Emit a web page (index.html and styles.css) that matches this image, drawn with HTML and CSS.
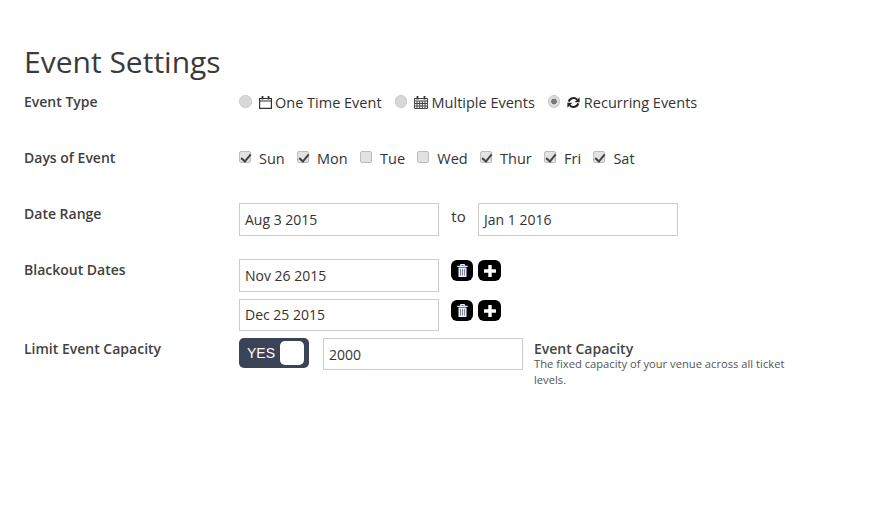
FILE: index.html
```html
<!DOCTYPE html>
<html lang="en">
<head>
<meta charset="utf-8">
<title>Event Settings</title>
<link rel="stylesheet" href="styles.css">
</head>
<body>
<main class="page">
  <h1 class="title">Event Settings</h1>

  <section class="row row-type">
    <div class="label">Event Type</div>
    <div class="options">
      <label class="opt opt-radio"><span class="radio"></span>
        <svg class="ico" viewBox="0 0 13 13" width="13" height="13"><path d="M.6 2.500h11.800v9.900H.6z M.6 5h11.800" fill="none" stroke="#333" stroke-width="1.200"/><path d="M3.500 0v3.500M9.500 0v3.500" stroke="#333" stroke-width="1.800" fill="none"/></svg>
        <span>One Time Event</span></label>
      <label class="opt opt-radio"><span class="radio"></span>
        <svg class="ico" viewBox="0 0 14 13" width="14" height="13"><path d="M.5 2.500h13v10h-13z M.5 5h13 M.5 7.500h13 M.5 10h13 M3 5v7.500 M5.700 5v7.500 M8.300 5v7.500 M11 5v7.500" fill="none" stroke="#444" stroke-width="1"/><path d="M3.500 0v3.500M10.500 0v3.500" stroke="#333" stroke-width="1.800" fill="none"/></svg>
        <span>Multiple Events</span></label>
      <label class="opt opt-radio"><span class="radio radio-on"></span>
        <svg class="ico" viewBox="0 0 13 13" width="13" height="13"><path d="M1.700 5.600A5 5 0 0 1 10.200 3.700" fill="none" stroke="#222" stroke-width="2"/><path d="M12.600 1.200v5h-5z" fill="#222"/><path d="M11.300 7.400A5 5 0 0 1 2.800 9.300" fill="none" stroke="#222" stroke-width="2"/><path d="M.4 11.800v-5h5z" fill="#222"/></svg>
        <span>Recurring Events</span></label>
    </div>
  </section>

  <section class="row row-days">
    <div class="label">Days of Event</div>
    <div class="options days">
      <label class="opt"><span class="check on"></span><span>Sun</span></label>
      <label class="opt"><span class="check on"></span><span>Mon</span></label>
      <label class="opt"><span class="check"></span><span>Tue</span></label>
      <label class="opt"><span class="check"></span><span>Wed</span></label>
      <label class="opt"><span class="check on"></span><span>Thur</span></label>
      <label class="opt"><span class="check on"></span><span>Fri</span></label>
      <label class="opt"><span class="check on"></span><span>Sat</span></label>
    </div>
  </section>

  <section class="row row-date">
    <div class="label">Date Range</div>
    <div class="range">
      <div class="field">Aug 3 2015</div>
      <span class="to">to</span>
      <div class="field">Jan 1 2016</div>
    </div>
  </section>

  <section class="row row-blackout">
    <div class="label">Blackout Dates</div>
    <div class="stack">
      <div class="date-line">
        <div class="field">Nov 26 2015</div>
        <div class="btns">
          <span class="btn"><svg viewBox="0 0 11 13" width="11" height="13"><path d="M3.800 2V.7h3.400V2M.3 2.400h10.400" fill="none" stroke="#e8f0ff" stroke-width="1.200"/><path d="M1.500 3.500h8v9.500h-8z" fill="#e8f0ff"/><path d="M3.500 5v6.500M5.500 5v6.500M7.500 5v6.500" stroke="#667" stroke-width=".8"/></svg></span>
          <span class="btn"><svg viewBox="0 0 12 12" width="12" height="12"><path d="M6 0v12M0 6h12" stroke="#fff" stroke-width="3.400"/></svg></span>
        </div>
      </div>
      <div class="date-line second">
        <div class="field">Dec 25 2015</div>
        <div class="btns">
          <span class="btn"><svg viewBox="0 0 11 13" width="11" height="13"><path d="M3.800 2V.7h3.400V2M.3 2.400h10.400" fill="none" stroke="#e8f0ff" stroke-width="1.200"/><path d="M1.500 3.500h8v9.500h-8z" fill="#e8f0ff"/><path d="M3.500 5v6.500M5.500 5v6.500M7.500 5v6.500" stroke="#667" stroke-width=".8"/></svg></span>
          <span class="btn"><svg viewBox="0 0 12 12" width="12" height="12"><path d="M6 0v12M0 6h12" stroke="#fff" stroke-width="3.400"/></svg></span>
        </div>
      </div>
    </div>
  </section>

  <section class="row row-limit">
    <div class="label">Limit Event Capacity</div>
    <div class="limit">
      <div class="toggle"><span class="toggle-text">YES</span><span class="knob"></span></div>
      <div class="field">2000</div>
      <div class="help">
        <div class="help-title">Event Capacity</div>
        <div class="help-text">The fixed capacity of your venue across all ticket levels.</div>
      </div>
    </div>
  </section>
</main>
</body>
</html>
```
FILE: styles.css
```css
* { box-sizing: border-box; }
html, body { margin: 0; padding: 0; background: #fff; }
body { font-family: "Open Sans", sans-serif; color: #333; font-size: 14px; }
.page { padding: 42px 0 0 24px; }
.title { margin: 0; font-size: 30px; font-weight: 400; line-height: 40px; color: #3a3a3a; height: 49px; }
.row { display: flex; align-items: flex-start; }
.label { width: 215px; flex: none; font-weight: 600; font-size: 14px; line-height: 18px; color: #3f3f3f; padding-top: 2px; }
.row-type { height: 56px; }
.row-days { height: 56px; }
.row-date { height: 56px; }
.row-blackout { height: 79px; }
.options { display: flex; padding-top: 2px; font-size: 14.500px; line-height: 20px; }
.opt { display: flex; align-items: flex-start; }
.opt-radio { margin-right: 13px; }
.opt-radio .ico { margin: 3px 3.500px 0 7px; }
.days .opt { margin-right: 12.300px; }
.days .opt .check { margin-right: 8px; }
.radio { width: 12.500px; height: 12.500px; border-radius: 50%; margin-top: 2px; background: #d8d8d8; border: 1px solid #c8c8c8; }
.radio-on { background: radial-gradient(circle, #777 0 2.500px, #dcdcdc 3.200px); }
.check { position: relative; width: 12px; height: 12px; border-radius: 2px; margin-top: 2px; background: #e2e2e2; border: 1px solid #bdbdbd; }
.check.on::after { content: ""; position: absolute; left: 3px; top: 0; width: 4px; height: 8px; border: solid #444; border-width: 0 2px 2px 0; transform: rotate(40deg); }
.field { width: 200px; flex: none; height: 33px; border: 1px solid #ccc; padding-left: 5px; font-size: 14px; line-height: 31px; color: #333; background: #fff; }
.range { display: flex; }
.to { width: 39px; text-align: center; font-size: 15px; line-height: 26px; }
.date-line { display: flex; }
.date-line.second { margin-top: 7px; }
.date-line.second .field { height: 32px; line-height: 30px; }
.btns { display: flex; gap: 5px; margin: 1px 0 0 12px; }
.btn { width: 22px; height: 21px; background: #000; border-radius: 6px; display: flex; align-items: center; justify-content: center; }
.btn + .btn { width: 23px; }
.limit { display: flex; }
.toggle { width: 70px; height: 30px; background: #3b4457; border-radius: 5px; display: flex; align-items: center; justify-content: space-between; padding: 0 5px 0 8px; margin-right: 14px; font-family: "Liberation Sans", sans-serif; color: #fff; font-size: 14px; }
.knob { width: 24px; height: 24px; background: #fff; border-radius: 5px; }
.limit .field { height: 32px; line-height: 31px; }
.help { width: 270px; margin-left: 11px; }
.help-title { font-size: 14px; font-weight: 600; line-height: 14px; color: #444; margin-top: 4px; }
.help-text { font-size: 11.200px; line-height: 16px; color: #555; }
```
